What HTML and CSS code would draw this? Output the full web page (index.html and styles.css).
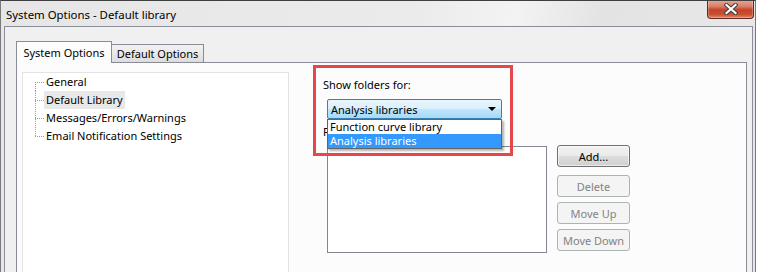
FILE: index.html
```html
<!DOCTYPE html>
<html>
<head>
    <title>System Options - Default library</title>
    <meta name="viewport" content="width=device-width, initial-scale=1.0">
    <link rel="stylesheet" href="styles.css">
</head>
<body>
<div class="window">
    <div class="titlebar">
        <span class="title">System Options - Default library</span>
        <button type="button" class="close-btn">
            <svg width="14" height="12" viewBox="0 0 14 12">
                <path d="M2.5 2 L11.5 10 M11.5 2 L2.5 10" stroke="#3e3e3e" stroke-width="4.2" stroke-linecap="square"/>
                <path d="M2.5 2 L11.5 10 M11.5 2 L2.5 10" stroke="#ffffff" stroke-width="2.2" stroke-linecap="square"/>
            </svg>
        </button>
    </div>
    <div class="client">
        <div class="tabs">
            <div class="tab tab-active">System Options</div>
            <div class="tab">Default Options</div>
        </div>
        <div class="pane">
            <div class="tree-panel">
                <ul class="tree">
                    <li class="tree-first"><span>General</span></li>
                    <li class="tree-selected"><span>Default Library</span></li>
                    <li><span>Messages/Errors/Warnings</span></li>
                    <li class="tree-last"><span>Email Notification Settings</span></li>
                </ul>
            </div>
            <div class="options">
                <div class="opt-label">Show folders for:</div>
                <div class="combo-wrap">
                    <div class="combo">
                        <span>Analysis libraries</span>
                        <span class="combo-arrow"></span>
                    </div>
                    <ul class="dropdown">
                        <li>Function curve library</li>
                        <li class="dropdown-selected">Analysis libraries</li>
                    </ul>
                </div>
                <div class="opt-label folders-label">Folders:</div>
                <div class="folders-row">
                    <div class="listbox"></div>
                    <div class="btn-col">
                        <button type="button" class="dlg-btn btn-default">Add...</button>
                        <button type="button" class="dlg-btn" disabled>Delete</button>
                        <button type="button" class="dlg-btn" disabled>Move Up</button>
                        <button type="button" class="dlg-btn" disabled>Move Down</button>
                    </div>
                </div>
            </div>
        </div>
    </div>
    <div class="highlight"></div>
</div>
</body>
</html>
```

FILE: styles.css
```css
body {
    margin: 0;
    background: #ffffff;
    font-family: "Noto Sans", "Open Sans", sans-serif;
    font-size: 11px;
    color: #000;
}

.window {
    position: relative;
    width: 756px;
    height: 272px;
    box-sizing: border-box;
    border: 1px solid #7a7a7a;
    border-top-color: #3f3f3f;
    border-bottom: none;
    background: #e7e7e7;
    overflow: hidden;
}

/* title bar */
.titlebar {
    display: flex;
    justify-content: space-between;
    align-items: flex-start;
    height: 25px;
    background: linear-gradient(100deg, #e6e6e6 0%, #ebebeb 55%, #f3f3f3 68%, #e3e3e3 80%, #e8e8e8 100%);
}

.title {
    padding-left: 5px;
    line-height: 27px;
    font-size: 11.4px;
    color: #000;
}

.close-btn {
    display: flex;
    align-items: center;
    justify-content: center;
    width: 47px;
    height: 19px;
    margin: -1px 1px 0 0;
    padding: 0;
    border: 1px solid #5e2a22;
    border-top: none;
    border-radius: 0 0 4px 4px;
    background: linear-gradient(180deg, #e9a898 0%, #d9806a 35%, #c4432b 55%, #c9502f 80%, #e08a6b 100%);
    box-shadow: inset 0 0 0 1px rgba(255, 255, 255, 0.25);
}

/* client area */
.client {
    margin: 0 2px 0 3px;
    height: 260px;
    border: 1px solid #8a8f99;
    border-bottom: none;
    background: #f0f0f0;
    padding: 14px 0 0 11px;
}

.tabs {
    display: flex;
    align-items: flex-end;
    height: 21px;
}

.tab {
    box-sizing: border-box;
    width: 92px;
    height: 18px;
    line-height: 17px;
    text-align: center;
    border: 1px solid #898c95;
    border-left: none;
    border-bottom: none;
    background: linear-gradient(180deg, #f2f2f2 0%, #e9e9e9 50%, #dcdcdc 100%);
}

.tab-active {
    width: 96px;
    height: 22px;
    line-height: 21px;
    border-left: 1px solid #898c95;
    margin-bottom: -1px;
    position: relative;
    z-index: 1;
    background: #fcfcfc;
}

.pane {
    display: flex;
    align-items: flex-start;
    box-sizing: border-box;
    width: 731px;
    height: 260px;
    border: 1px solid #898c95;
    background: #fcfcfc;
}

/* tree */
.tree-panel {
    box-sizing: border-box;
    width: 267px;
    height: 240px;
    margin: 9px 0 0 5px;
    border: 1px solid #e3e3e3;
    background: #ffffff;
}

.tree {
    list-style: none;
    margin: 0;
    padding: 0;
}

.tree li {
    height: 18px;
    line-height: 18px;
    padding-left: 21px;
    white-space: nowrap;
    background:
        repeating-linear-gradient(to right, #9a9a9a 0 1px, transparent 1px 2px) 12px 9px / 9px 1px no-repeat,
        repeating-linear-gradient(to bottom, #9a9a9a 0 1px, transparent 1px 2px) 12px 0 / 1px 18px no-repeat;
}

.tree li.tree-first {
    background:
        repeating-linear-gradient(to right, #9a9a9a 0 1px, transparent 1px 2px) 12px 9px / 9px 1px no-repeat,
        repeating-linear-gradient(to bottom, #9a9a9a 0 1px, transparent 1px 2px) 12px 9px / 1px 9px no-repeat;
}

.tree li.tree-last {
    background:
        repeating-linear-gradient(to right, #9a9a9a 0 1px, transparent 1px 2px) 12px 9px / 9px 1px no-repeat,
        repeating-linear-gradient(to bottom, #9a9a9a 0 1px, transparent 1px 2px) 12px 0 / 1px 10px no-repeat;
}

.tree li span {
    display: inline-block;
    padding: 0 2px;
}

.tree li.tree-selected span {
    background: #e8e8e8;
}

/* right side options */
.options {
    margin: 14px 0 0 34px;
}

.opt-label {
    line-height: 16px;
}

/* sits behind the open dropdown, only the "F" shows */
.folders-label {
    margin-top: 5px;
}

.combo-wrap {
    position: relative;
    width: 175px;
    margin: 6px 0 0 4px;
}

.combo {
    display: flex;
    justify-content: space-between;
    align-items: center;
    box-sizing: border-box;
    height: 20px;
    padding: 0 5px 0 3px;
    border: 1px solid #3c7fb1;
    border-radius: 2px;
    background: linear-gradient(180deg, #eaf6fd 0%, #d9f0fc 48%, #bee6fd 52%, #a7d9f5 100%);
}

.combo-arrow {
    width: 0;
    height: 0;
    border-left: 4px solid transparent;
    border-right: 4px solid transparent;
    border-top: 4px solid #000;
}

.dropdown {
    position: absolute;
    left: 0;
    top: 100%;
    z-index: 2;
    box-sizing: border-box;
    width: 175px;
    margin: 0;
    padding: 0;
    list-style: none;
    border: 1px solid #646464;
    background: #ffffff;
    box-shadow: 2px 2px 2px rgba(0, 0, 0, 0.3);
}

.dropdown li {
    height: 14px;
    line-height: 14px;
    padding-left: 2px;
}

.dropdown li.dropdown-selected {
    background: #3399ff;
    color: #ffffff;
}

.folders-row {
    display: flex;
    align-items: flex-start;
    margin-top: 6px;
}

.listbox {
    box-sizing: border-box;
    width: 220px;
    height: 107px;
    margin-left: 4px;
    border: 1px solid #828790;
    background: #ffffff;
}

.btn-col {
    display: flex;
    flex-direction: column;
    gap: 5px;
    margin: -1px 0 0 10px;
}

.dlg-btn {
    box-sizing: border-box;
    width: 73px;
    height: 22px;
    padding: 0;
    font-family: inherit;
    font-size: 11px;
    color: #838383;
    border: 1px solid #adb2b5;
    border-radius: 3px;
    background: #f4f4f4;
}

.btn-default {
    margin-bottom: 3px;
    color: #000;
    border-color: #707070;
    background: linear-gradient(180deg, #f2f2f2 0%, #ebebeb 48%, #dddddd 52%, #cfcfcf 100%);
    box-shadow: inset 0 0 0 1px rgba(255, 255, 255, 0.6);
}

/* annotation box drawn over the dialog */
.highlight {
    position: absolute;
    left: 312px;
    top: 64px;
    width: 194px;
    height: 85px;
    border: 3px solid #e5474a;
    z-index: 3;
}
```
